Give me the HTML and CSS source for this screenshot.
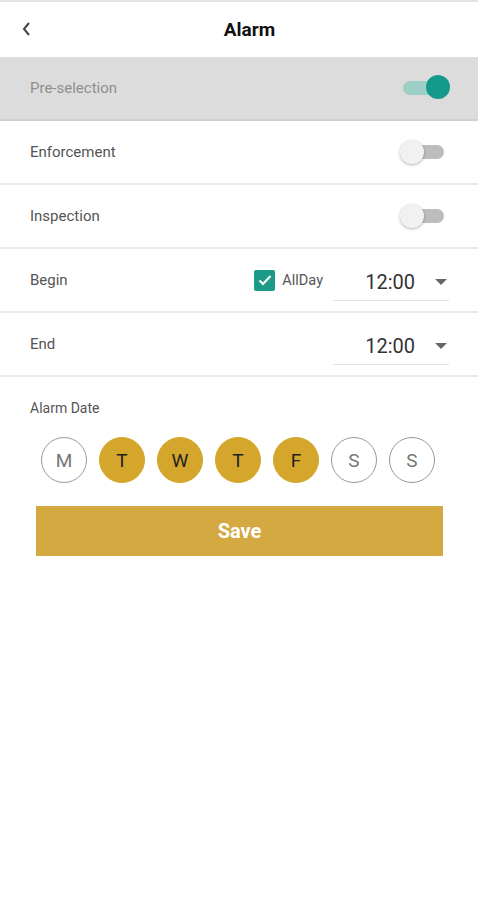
FILE: index.html
```html
<!DOCTYPE html>
<html lang="en">
<head>
    <meta charset="UTF-8">
    <meta name="viewport" content="width=device-width, initial-scale=1.0">
    <title>Alarm</title>
    <link rel="stylesheet" href="styles.css">
</head>
<body>
    <div class="topline"></div>
    <header class="header">
        <button class="back" aria-label="Back">
            <svg width="12" height="16" viewBox="0 0 12 16"><path d="M8 2 L3 8 L8 14" fill="none" stroke="#444" stroke-width="2"/></svg>
        </button>
        <h1>Alarm</h1>
    </header>

    <div class="row row-disabled">
        <span class="label">Pre-selection</span>
        <span class="switch on"><span class="thumb"></span></span>
    </div>
    <div class="row">
        <span class="label">Enforcement</span>
        <span class="switch"><span class="thumb"></span></span>
    </div>
    <div class="row">
        <span class="label">Inspection</span>
        <span class="switch"><span class="thumb"></span></span>
    </div>
    <div class="row">
        <span class="label">Begin</span>
        <div class="controls">
            <span class="check">
                <svg width="14" height="12" viewBox="0 0 14 12"><path d="M1.5 6.5 L5 10 L12.5 2" fill="none" stroke="#fff" stroke-width="2.2"/></svg>
            </span>
            <span class="allday">AllDay</span>
            <div class="time">
                <span>12:00</span>
                <span class="caret"></span>
            </div>
        </div>
    </div>
    <div class="row">
        <span class="label">End</span>
        <div class="controls">
            <div class="time">
                <span>12:00</span>
                <span class="caret"></span>
            </div>
        </div>
    </div>

    <section class="dates">
        <div class="dates-title">Alarm Date</div>
        <div class="days">
            <span class="day">M</span>
            <span class="day active">T</span>
            <span class="day active">W</span>
            <span class="day active">T</span>
            <span class="day active">F</span>
            <span class="day">S</span>
            <span class="day">S</span>
        </div>
        <button class="save">Save</button>
    </section>
</body>
</html>
```

FILE: styles.css
```css
body {
    margin: 0;
    font-family: Roboto, "Noto Sans", sans-serif;
    background: #fff;
    color: #444;
}
.topline {
    height: 2px;
    background: #e2e2e2;
}
.header {
    height: 55px;
    display: flex;
    align-items: center;
    justify-content: center;
    position: relative;
}
.header h1 {
    margin: 0;
    font-size: 19px;
    font-weight: bold;
    color: #111;
    padding-left: 21px;
}
.back {
    position: absolute;
    left: 20px;
    top: 19px;
    background: none;
    border: none;
    padding: 0;
    width: 14px;
    height: 16px;
}
.row {
    height: 62px;
    border-bottom: 2px solid #e9e9e9;
    display: flex;
    align-items: center;
    justify-content: space-between;
    padding: 0 29px 0 30px;
}
.label {
    font-size: 15px;
    color: #555;
}
.row-disabled {
    background: #dcdcdc;
    border-bottom-color: #d0d0d0;
}
.row-disabled .label {
    color: #8e8e8e;
}
.switch {
    width: 34px;
    height: 14px;
    border-radius: 7px;
    background: #bdbdbd;
    position: relative;
    margin-right: 5px;
}
.switch .thumb {
    position: absolute;
    left: -10px;
    top: -5px;
    width: 24px;
    height: 24px;
    border-radius: 50%;
    background: #f1f1f1;
    box-shadow: 0 1px 3px rgba(0, 0, 0, 0.3);
}
.switch.on {
    background: #9ccfc6;
    margin-right: 12px;
}
.switch.on .thumb {
    left: 23px;
    top: -6px;
    width: 24px;
    height: 24px;
    background: #15998a;
    box-shadow: none;
}
.controls {
    display: flex;
    align-items: center;
}
.check {
    width: 21px;
    height: 21px;
    border-radius: 2px;
    background: #1b9a87;
    display: flex;
    align-items: center;
    justify-content: center;
}
.allday {
    font-size: 14.5px;
    color: #555;
    margin-left: 7px;
    margin-right: 10px;
}
.time {
    width: 116px;
    height: 36px;
    border-bottom: 1px solid #e2e2e2;
    display: flex;
    align-items: center;
    justify-content: flex-end;
    font-size: 20px;
    color: #333;
    margin-top: 4px;
}
.caret {
    width: 0;
    height: 0;
    border-left: 6px solid transparent;
    border-right: 6px solid transparent;
    border-top: 6px solid #666;
    margin-left: 20px;
    margin-right: 2px;
}
.dates {
    padding: 23px 35px 0 30px;
}
.dates-title {
    font-size: 14px;
    color: #555;
}
.days {
    display: flex;
    gap: 12px;
    margin: 21px 0 23px 11px;
}
.day {
    width: 44px;
    height: 44px;
    border: 1px solid #999;
    border-radius: 50%;
    display: flex;
    align-items: center;
    justify-content: center;
    font-size: 19px;
    color: #777;
}
.day.active {
    background: #d4a62b;
    border-color: #d4a62b;
    color: #222;
}
.save {
    width: 407px;
    height: 50px;
    margin-left: 6px;
    border: none;
    background: #d4a942;
    color: #fff;
    font-family: Roboto, sans-serif;
    font-size: 20px;
    font-weight: bold;
}
```
